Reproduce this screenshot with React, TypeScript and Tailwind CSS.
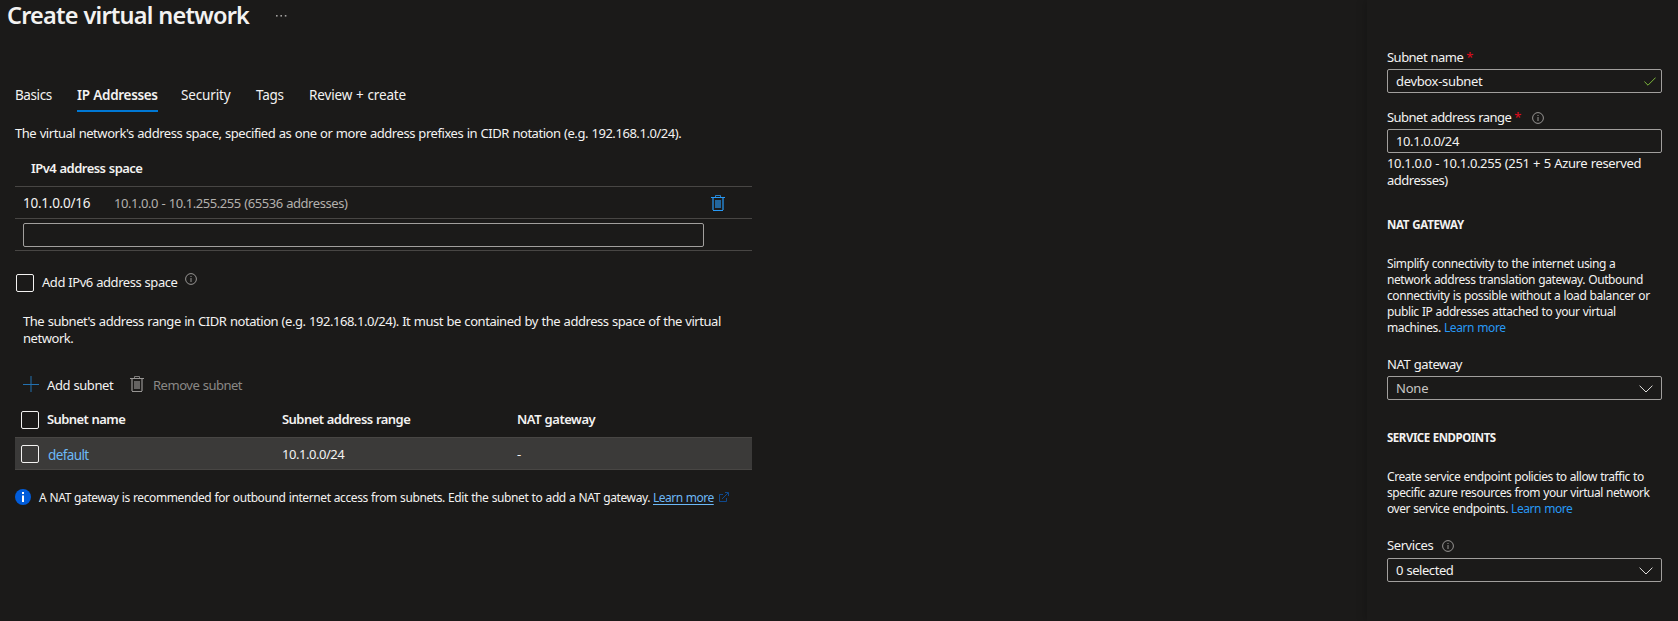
import type { ReactNode } from 'react';

function TrashIcon({ className = '' }: { className?: string }) {
  return (
    <svg className={className} width="14" height="16" viewBox="0 0 14 16" fill="none" stroke="currentColor">
      <path d="M4.5 2V.5h5V2" strokeOpacity=".8" />
      <path d="M0 2.5h14" />
      <path d="M2 3v12M12 3v12" strokeWidth="2" strokeOpacity=".6" />
      <path d="M2 15.5h10" />
      <rect x="4" y="5" width="6" height="8" fill="currentColor" stroke="none" opacity=".6" />
    </svg>
  );
}

function InfoOutline({ className = '' }: { className?: string }) {
  return (
    <svg className={`shrink-0 text-[#979593] ${className}`} width="12" height="12" viewBox="0 0 12 12" fill="none" stroke="currentColor">
      <circle cx="6" cy="6" r="5.4" />
      <path d="M6 5v4M6 3v1" />
    </svg>
  );
}

function Chevron() {
  return (
    <svg className="mr-2 mt-px text-[#e1dfdd]" width="14" height="8" viewBox="0 0 14 8" fill="none" stroke="currentColor">
      <path d="M.6.7 7 7l6.4-6.3" />
    </svg>
  );
}

function Checkbox() {
  return <span className="block h-[18px] w-[18px] shrink-0 rounded-[2px] border border-[#f3f2f1]" />;
}

function Field({ children, icon, className = '' }: { children?: ReactNode; icon?: ReactNode; className?: string }) {
  return (
    <div className={`flex h-6 items-center justify-between rounded-[2px] border border-[#a19f9d] pl-2 leading-[22px] ${className}`}>
      <span>{children}</span>
      {icon}
    </div>
  );
}

function Main() {
  return (
    <main className="w-[1367px] shrink-0">
      <div className="flex h-[30px] items-start pl-[7px]">
        <h1 className="w-[268px] text-[23.5px] font-semibold leading-[30px] tracking-[-0.8px]">Create virtual network</h1>
        <svg className="mt-[15px]" width="13" height="2" viewBox="0 0 13 2" fill="#a19f9d">
          <rect x="1" width="1.6" height="1.6" />
          <rect x="5.4" width="1.6" height="1.6" />
          <rect x="9.8" width="1.6" height="1.6" />
        </svg>
      </div>

      <div className="w-[752px] pl-[15px]">
        <nav className="mt-[55px] flex h-[27px] text-[13.5px] leading-5">
          <span className="w-[62px] tracking-[-0.4px]">Basics</span>
          <span className="mr-[23px] w-[81px] whitespace-nowrap border-b-2 border-[#0078d4] font-semibold tracking-[-0.33px]">IP Addresses</span>
          <span className="w-[75px] tracking-[-0.15px]">Security</span>
          <span className="w-[53px] tracking-[-0.3px]">Tags</span>
          <span className="tracking-[-0.15px]">Review + create</span>
        </nav>

        <p className="mt-[13px] whitespace-nowrap tracking-[-0.45px]">
          The virtual network's address space, specified as one or more address prefixes in CIDR notation (e.g. 192.168.1.0/24).
        </p>

        <h2 className="mt-[19px] pl-4 font-semibold tracking-[-0.54px]">IPv4 address space</h2>
        <div className="mt-[10px] border-y border-[#484644]">
          <div className="flex h-[31px] pt-2">
            <span className="w-[91px] pl-[8px] text-[13.5px] tracking-[-0.25px]">10.1.0.0/16</span>
            <span className="grow pl-[8px] tracking-[-0.44px] text-[#b3b0ad]">10.1.0.0 - 10.1.255.255 (65536 addresses)</span>
            <TrashIcon className="mr-[27px] text-[#2899f5]" />
          </div>
          <div className="h-8 border-t border-[#484644] pl-2 pt-1">
            <Field className="w-[681px]" />
          </div>
        </div>

        <div className="mt-[23px] flex h-[18px] pl-px">
          <Checkbox />
          <span className="w-[151px] pl-2 tracking-[-0.46px]">Add IPv6 address space</span>
          <InfoOutline className="-mt-px" />
        </div>

        <p className="mt-[21px] whitespace-nowrap pl-2 leading-[17px] tracking-[-0.452px]">
          The subnet's address range in CIDR notation (e.g. 192.168.1.0/24). It must be contained by the address space of the virtual
          <br />
          network.
        </p>

        <div className="mt-[29px] flex h-4 pl-2">
          <svg width="16" height="16" viewBox="0 0 16 16" stroke="#2371b0" fill="none">
            <path d="M0 8.5h16M8 0v16" />
          </svg>
          <span className="w-[91px] pl-2 pt-px tracking-[-0.43px]">Add subnet</span>
          <TrashIcon className="text-[#979593]" />
          <span className="pl-[9px] pt-px tracking-[-0.48px] text-[#8a8886]">Remove subnet</span>
        </div>

        <div className="mt-[19px] flex h-[18px] pl-[6px] font-semibold">
          <Checkbox />
          <span className="w-[243px] pl-2 tracking-[-0.58px]">Subnet name</span>
          <span className="w-[235px] tracking-[-0.55px]">Subnet address range</span>
          <span className="tracking-[-0.46px]">NAT gateway</span>
        </div>
        <div className="mt-2 flex h-[33px] border-y border-[#484644] bg-[#3b3a39] pl-[6px] pt-[7px]">
          <Checkbox />
          <span className="w-[243px] pl-[9px] pt-[2px] text-[13.5px] tracking-[-0.6px] text-[#6cb8f6]">default</span>
          <span className="w-[235px] pt-px tracking-[-0.46px]">10.1.0.0/24</span>
          <span className="pt-px">-</span>
        </div>

        <div className="mt-[19px] flex h-4 whitespace-nowrap text-[12px]">
          <svg width="16" height="16" viewBox="0 0 16 16">
            <circle cx="8" cy="8" r="8" fill="#015cda" />
            <path d="M7 6.5h2V13H7zM7 3h2v2H7z" fill="#fff" />
          </svg>
          <span className="w-[622px] pl-2 pt-px tracking-[-0.402px]">
            A NAT gateway is recommended for outbound internet access from subnets. Edit the subnet to add a NAT gateway.
          </span>
          <a className="w-[60px] pt-px tracking-[-0.5px] text-[#6cb8f6] underline underline-offset-2">Learn more</a>
          <svg className="ml-[6px] mt-[3px]" width="10" height="10" viewBox="0 0 10 10" fill="none" stroke="#0f4f9c">
            <path d="M4 2.5H.5v7h7V6M3 7l6-6M6 .5h3.5V4" strokeWidth=".9" />
          </svg>
        </div>
      </div>
    </main>
  );
}

function SubnetPanel() {
  const required = <span className="pl-[3px] text-[#e00b1c]">*</span>;
  return (
    <aside className="grow pl-5 pt-[49px] shadow-[0_0_10px_rgba(0,0,0,0.25)]">
      <div className="w-[275px]">
        <div className="tracking-[-0.52px]">Subnet name{required}</div>
        <Field
          className="mt-1"
          icon={
            <svg className="mr-[5px]" width="12" height="9" viewBox="0 0 12 9" fill="none" stroke="#7fba3c">
              <path d="M.4 4.6 4 8.2 11.6.6" />
            </svg>
          }
        >
          <span className="tracking-[-0.33px]">devbox-subnet</span>
        </Field>

        <div className="mt-4 flex h-4">
          <span className="w-[145px] tracking-[-0.53px]">Subnet address range{required}</span>
          <InfoOutline className="mt-[3px]" />
        </div>
        <Field className="mt-1">
          <span className="tracking-[-0.4px]">10.1.0.0/24</span>
        </Field>
        <p className="mt-[2px] whitespace-nowrap leading-[17px] tracking-[-0.37px]">
          10.1.0.0 - 10.1.0.255 (251 + 5 Azure reserved
          <br />
          <span className="tracking-[-0.5px]">addresses)</span>
        </p>

        <h3 className="mt-[28px] text-[11.5px] font-bold tracking-[-0.32px]">NAT GATEWAY</h3>
        <p className="mt-[23px] whitespace-nowrap text-[12px] tracking-[-0.41px]">
          Simplify connectivity to the internet using a<br />
          network address translation gateway. Outbound
          <br />
          connectivity is possible without a load balancer or
          <br />
          public IP addresses attached to your virtual
          <br />
          machines. <a className="text-[#2899f5]">Learn more</a>
        </p>

        <div className="mt-[20px] tracking-[-0.42px]">NAT gateway</div>
        <Field className="mt-1" icon={<Chevron />}>
          <span className="tracking-[-0.2px] text-[#c8c6c4]">None</span>
        </Field>

        <h3 className="mt-[30px] text-[11.5px] font-bold tracking-[-0.48px]">SERVICE ENDPOINTS</h3>
        <p className="mt-[23px] whitespace-nowrap text-[12px] tracking-[-0.45px]">
          Create service endpoint policies to allow traffic to
          <br />
          specific azure resources from your virtual network
          <br />
          over service endpoints. <a className="text-[#2899f5]">Learn more</a>
        </p>

        <div className="mt-5 flex h-4">
          <span className="w-[55px] tracking-[-0.42px]">Services</span>
          <InfoOutline className="mt-[3px]" />
        </div>
        <Field className="mt-[5px]" icon={<Chevron />}>
          <span className="tracking-[-0.45px]">0 selected</span>
        </Field>
      </div>
    </aside>
  );
}

export default function App() {
  return (
    <div className="flex h-[621px] w-[1678px] overflow-hidden bg-[#1b1a19] font-['Noto_Sans',sans-serif] text-[13px] leading-4 text-[#f3f2f1] [word-spacing:0.5px]">
      <Main />
      <SubnetPanel />
    </div>
  );
}
